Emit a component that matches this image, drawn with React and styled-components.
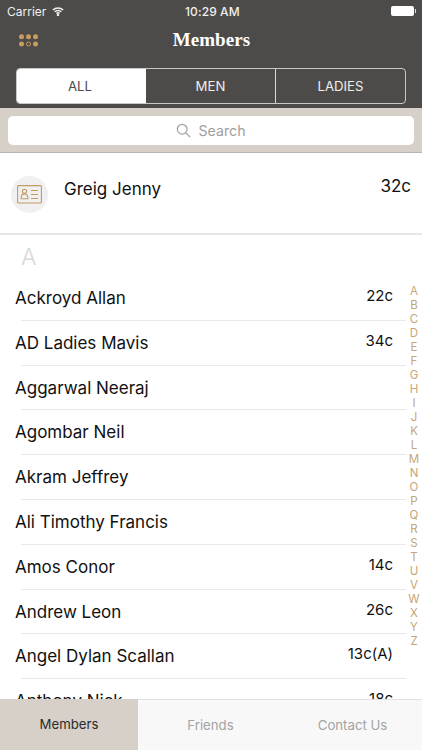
import styled, { createGlobalStyle } from 'styled-components';

const Global = createGlobalStyle`
  html, body {
    margin: 0;
    padding: 0;
    background: #fff;
    font-family: Inter, "Liberation Sans", sans-serif;
  }
  * {
    box-sizing: border-box;
  }
`;

const Page = styled.div`
  position: relative;
  width: 422px;
  height: 750px;
  display: flex;
  flex-direction: column;
  overflow: hidden;
`;

const Header = styled.header`
  height: 108px;
  flex: none;
  background: #4c4b49;
  color: #fff;
  display: flex;
  flex-direction: column;
`;

const StatusBar = styled.div`
  height: 22px;
  padding: 0 6px 0 7px;
  display: grid;
  grid-template-columns: 178px auto 1fr;
  align-items: center;
  font-size: 12px;
  color: #f0efee;
`;

const Carrier = styled.div`
  display: flex;
  align-items: center;
  gap: 6px;
`;

const Time = styled.div`
  font-weight: 500;
  letter-spacing: 0.1px;
`;

const Battery = styled.div`
  justify-self: end;
  width: 23px;
  height: 10px;
  position: relative;
  background: #fff;
  border-radius: 2px;
  margin-right: 2px;

  &::after {
    content: '';
    position: absolute;
    right: -2px;
    top: 3px;
    width: 1px;
    height: 4px;
    background: #ddd;
  }
`;

const NavBar = styled.div`
  height: 36px;
  padding: 0 18px 0 19px;
  display: grid;
  grid-template-columns: 1fr auto 1fr;
  align-items: center;
`;

const Title = styled.h1`
  margin: 0;
  font-family: "Liberation Serif", serif;
  font-size: 19px;
  font-weight: 700;
  letter-spacing: 0.1px;
`;

const Segments = styled.div`
  margin: 10px 16px 0 16px;
  height: 36px;
  display: grid;
  grid-template-columns: 129px 129px 1fr;
  border: 1px solid #c9c8c6;
  border-radius: 4px;
  overflow: hidden;
`;

const Segment = styled.div`
  display: flex;
  align-items: center;
  justify-content: center;
  font-size: 13.2px;
  padding-right: ${(p) => (p.$active ? '3px' : '0')};
  background: ${(p) => (p.$active ? '#fff' : 'transparent')};
  color: ${(p) => (p.$active ? '#4c4b49' : '#eeeeed')};
  border-left: ${(p) => (p.$divided ? '1px solid #d8d7d5' : '0')};
`;

const SearchBar = styled.div`
  height: 45px;
  flex: none;
  background: #d6d0c9;
  border-bottom: 1px solid #b9b6b1;
  padding: 8px;
`;

const SearchField = styled.div`
  height: 29px;
  background: #fff;
  border-radius: 5px;
  display: flex;
  align-items: center;
  justify-content: center;
  gap: 7px;
  color: #a0a0a0;
  font-size: 14.2px;
`;

const MyRow = styled.div`
  height: 82px;
  flex: none;
  border-bottom: 2px solid #e6e6e6;
  padding: 23px 11px 0 11px;
  display: flex;
  align-items: flex-start;
`;

const Avatar = styled.div`
  width: 37px;
  height: 37px;
  border-radius: 50%;
  background: #f0f0f0;
  display: flex;
  align-items: center;
  justify-content: center;
  flex: none;
`;

const MyName = styled.div`
  margin-left: 16px;
  flex: 1;
  font-size: 17px;
  line-height: 26px;
  color: #111;
`;

const MyCode = styled.div`
  font-size: 17px;
  line-height: 20px;
  color: #111;
`;

const Content = styled.div`
  flex: 1;
  min-height: 0;
  overflow: hidden;
`;

const SectionLabel = styled.div`
  height: 41px;
  padding: 7px 0 0 21px;
  font-size: 23px;
  line-height: 30px;
  font-weight: 300;
  color: #d8d8d8;
`;

const Row = styled.div`
  height: 44.8px;
  position: relative;
  padding: 0 29px 0 15px;
  display: flex;
  align-items: flex-start;
  justify-content: space-between;
  color: #111;

  &::after {
    content: '';
    position: absolute;
    left: 21px;
    right: 16px;
    bottom: 0;
    height: 1px;
    background: #e9e9ec;
  }
`;

const RowName = styled.div`
  font-size: 17px;
  line-height: 44px;
`;

const RowCode = styled.div`
  font-size: 15px;
  line-height: 40px;
`;

const IndexBar = styled.div`
  position: absolute;
  top: 284px;
  right: 0;
  width: 16px;
  display: flex;
  flex-direction: column;
  align-items: center;
  color: #c5a678;
  font-size: 11.5px;
  line-height: 14px;
`;

const TabBar = styled.nav`
  height: 51px;
  flex: none;
  display: grid;
  grid-template-columns: 138px 145px 1fr;
  background: #f8f8f8;
  border-top: 1px solid #e2e2e2;
`;

const Tab = styled.div`
  display: flex;
  align-items: center;
  justify-content: center;
  font-size: 13.2px;
  padding-bottom: 1px;
  margin-top: ${(p) => (p.$active ? '-1px' : '0')};
  background: ${(p) => (p.$active ? '#d6d0c9' : 'transparent')};
  color: ${(p) => (p.$active ? '#2b2b2b' : '#a3a3a3')};
`;

const WifiIcon = () => (
  <svg width="12" height="9" viewBox="0 0 13 10" fill="none" stroke="#f0efee" strokeWidth="1.6">
    <path d="M.8 3.4a8 8 0 0 1 11.4 0" />
    <path d="M2.8 5.4a5.2 5.2 0 0 1 7.4 0" />
    <path d="M4.7 7.3a2.6 2.6 0 0 1 3.6 0" />
    <circle cx="6.5" cy="8.9" r=".6" fill="#f0efee" />
  </svg>
);

const GridIcon = () => (
  <svg width="19" height="13" viewBox="0 0 19 13" style={{ display: 'block' }}>
    {[2.5, 9.5, 16.5].map((x) => (
      <circle key={x} cx={x} cy="2.7" r="2.5" fill="#c79c5c" />
    ))}
    <circle cx="2.5" cy="10" r="2.5" fill="#c79c5c" />
    <circle cx="9.5" cy="10" r="2" fill="none" stroke="#c79c5c" strokeWidth="1" />
    <circle cx="16.5" cy="10" r="2.5" fill="#c79c5c" />
  </svg>
);

const SearchIcon = () => (
  <svg width="15" height="15" viewBox="0 0 15 15" fill="none" stroke="#a0a0a0" strokeWidth="1.2">
    <circle cx="6.2" cy="6.2" r="4.9" />
    <path d="M9.8 9.8l4.2 4.2" />
  </svg>
);

const CardIcon = () => (
  <svg width="25" height="19" viewBox="0 0 25 19" fill="none" stroke="#c49a62" strokeWidth="1.1">
    <rect x=".6" y=".6" width="23.8" height="17.4" rx="1" />
    <circle cx="7.5" cy="6.3" r="2.1" />
    <path d="M4.2 13.8v-1.6a3.3 3.3 0 0 1 6.6 0v1.6z" />
    <path d="M14 5.5h7M14 9.5h7M14 13.5h7" />
  </svg>
);

const members = [
  ['Ackroyd Allan', '22c'],
  ['AD Ladies Mavis', '34c'],
  ['Aggarwal Neeraj', ''],
  ['Agombar Neil', ''],
  ['Akram Jeffrey', ''],
  ['Ali Timothy Francis', ''],
  ['Amos Conor', '14c'],
  ['Andrew Leon', '26c'],
  ['Angel Dylan Scallan', '13c(A)'],
  ['Anthony Nick', '18c'],
];

const letters = 'ABCDEFGHIJKLMNOPQRSTUVWXYZ'.split('');

export default function App() {
  return (
    <Page>
      <Global />
      <Header>
        <StatusBar>
          <Carrier>
            Carrier
            <WifiIcon />
          </Carrier>
          <Time>10:29 AM</Time>
          <Battery />
        </StatusBar>
        <NavBar>
          <GridIcon />
          <Title>Members</Title>
        </NavBar>
        <Segments>
          <Segment $active>ALL</Segment>
          <Segment>MEN</Segment>
          <Segment $divided>LADIES</Segment>
        </Segments>
      </Header>
      <SearchBar>
        <SearchField>
          <SearchIcon />
          Search
        </SearchField>
      </SearchBar>
      <MyRow>
        <Avatar>
          <CardIcon />
        </Avatar>
        <MyName>Greig Jenny</MyName>
        <MyCode>32c</MyCode>
      </MyRow>
      <Content>
        <SectionLabel>A</SectionLabel>
        {members.map(([name, code]) => (
          <Row key={name}>
            <RowName>{name}</RowName>
            <RowCode>{code}</RowCode>
          </Row>
        ))}
      </Content>
      <IndexBar>
        {letters.map((l) => (
          <span key={l}>{l}</span>
        ))}
      </IndexBar>
      <TabBar>
        <Tab $active>Members</Tab>
        <Tab>Friends</Tab>
        <Tab>Contact Us</Tab>
      </TabBar>
    </Page>
  );
}
